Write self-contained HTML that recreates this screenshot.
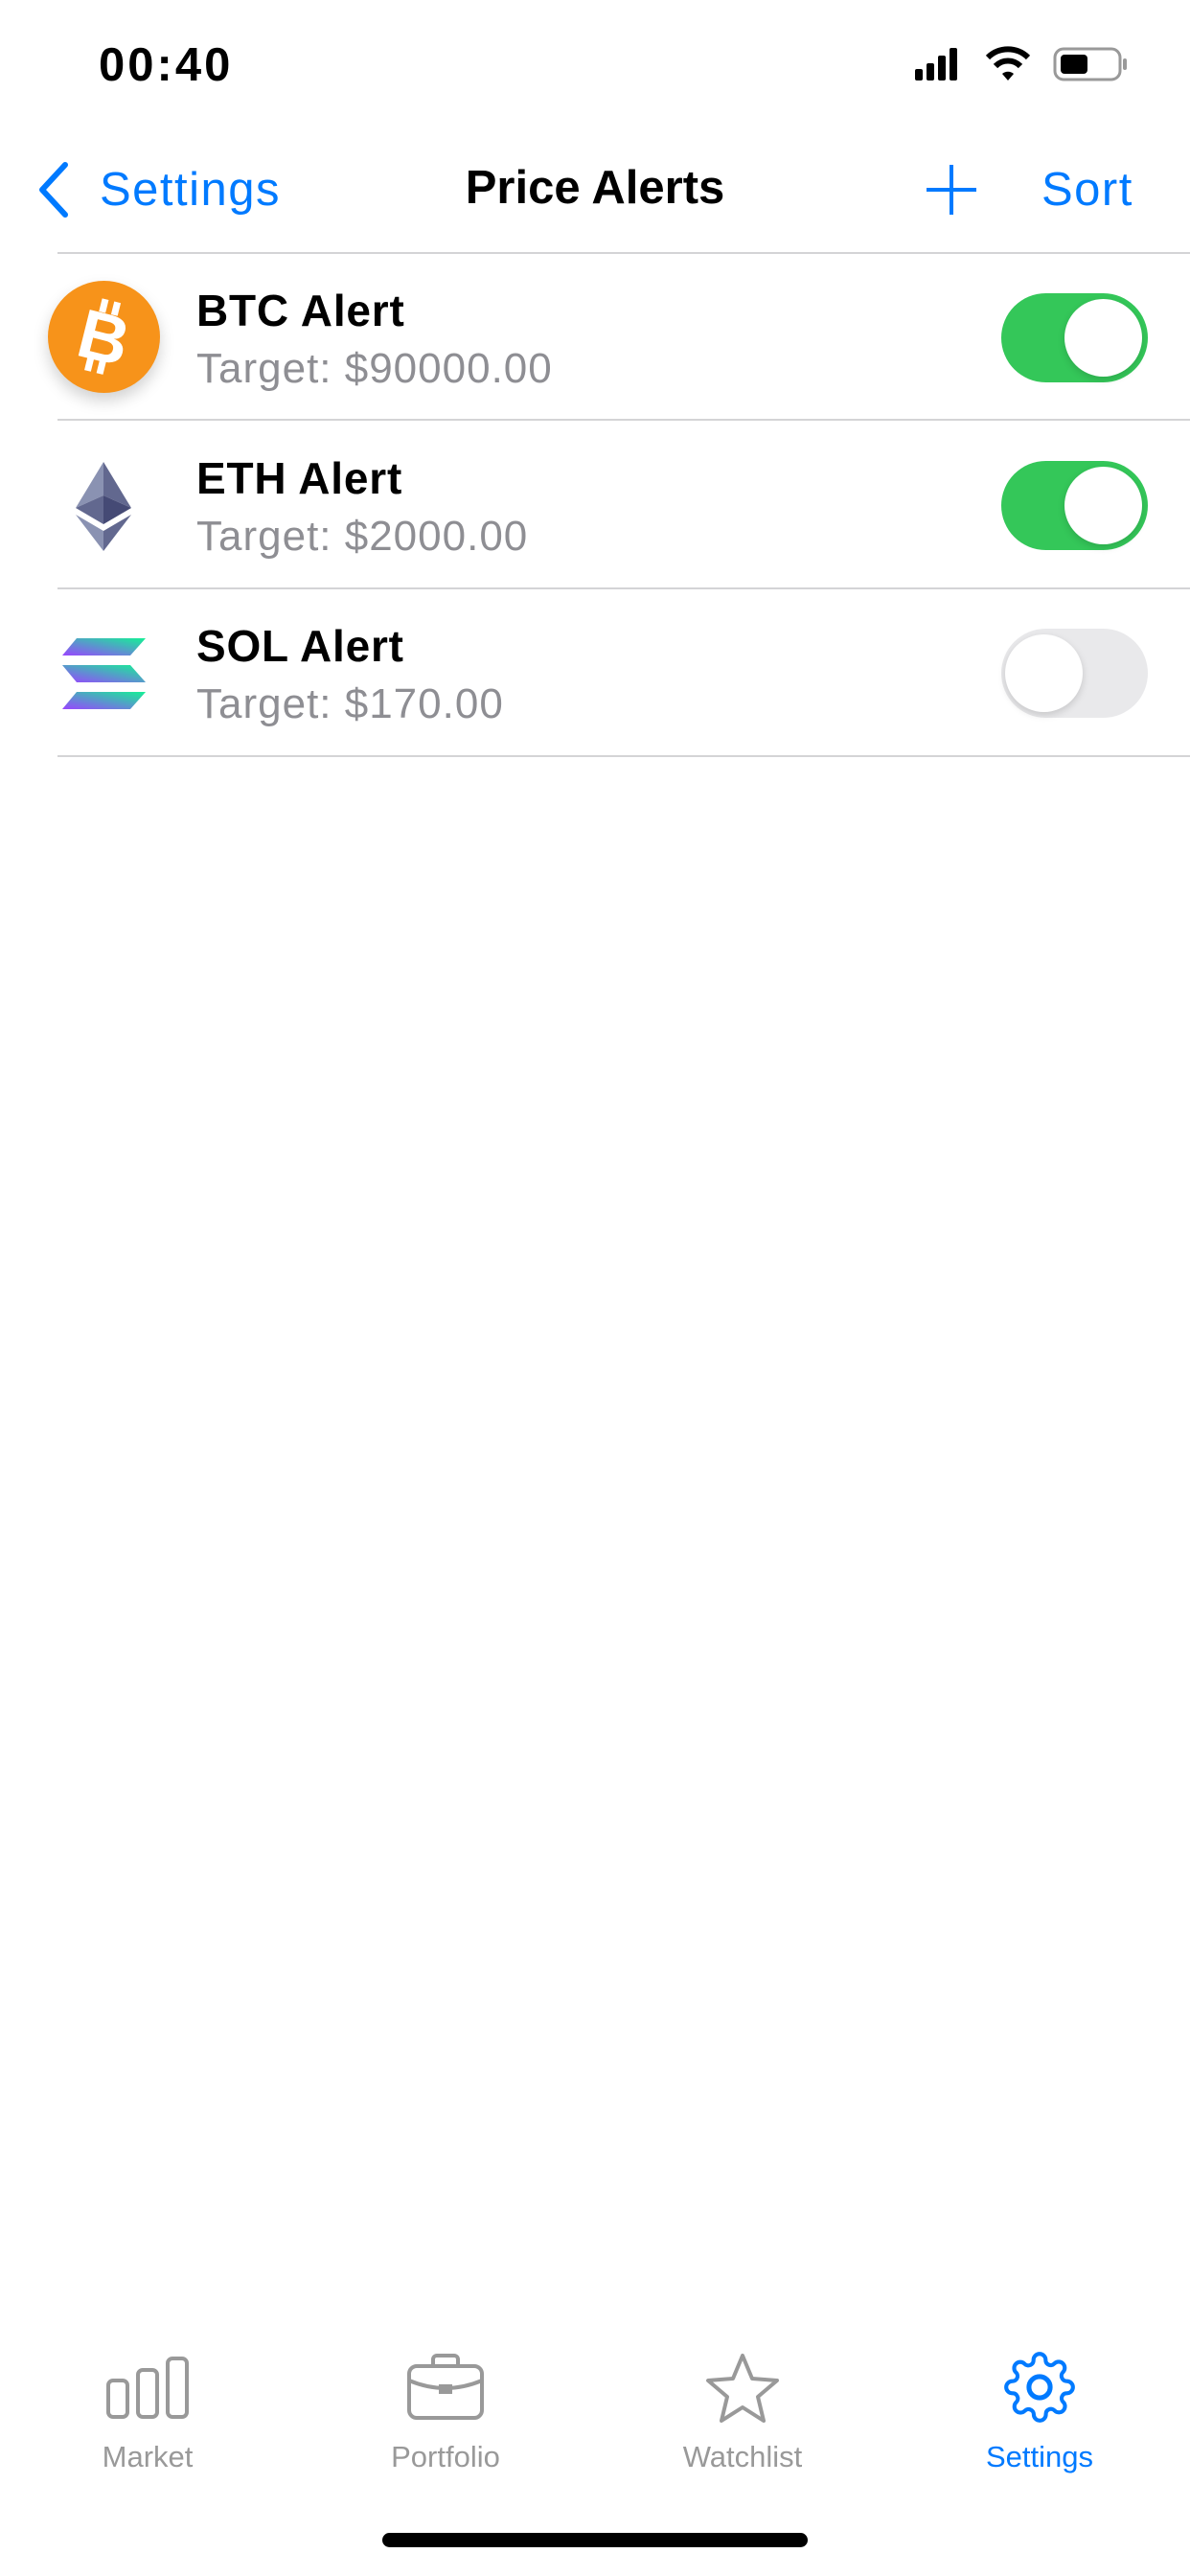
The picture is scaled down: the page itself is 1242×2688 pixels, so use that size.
<!DOCTYPE html>
<html><head><meta charset="utf-8"><style>
*{margin:0;padding:0;box-sizing:border-box}
body{width:1242px;height:2688px;background:#fff;position:relative;overflow:hidden;font-family:"Liberation Sans",sans-serif}
.a{position:absolute}
.blue{color:#007aff}
.sep{position:absolute;left:60px;right:0;height:2px;background:#d4d4d6}
.title{position:absolute;left:205px;font-size:46px;letter-spacing:0.8px;font-weight:bold;color:#000}
.sub{position:absolute;left:205px;font-size:44px;letter-spacing:1px;color:#8e8e93}
.tog{position:absolute;left:1045px;width:153px;height:93px;border-radius:47px}
.tog .k{position:absolute;top:6px;width:81px;height:81px;border-radius:50%;background:#fff;box-shadow:0 3px 8px rgba(0,0,0,.15)}
.on{background:#34c759}.on .k{right:6px}
.off{background:#e9e9eb}.off .k{left:4px}
.tl{position:absolute;top:2546px;font-size:31px;color:#999;text-align:center;width:220px}
</style></head><body>
<div class="a" style="left:103px;top:40px;font-size:49px;letter-spacing:3px;font-weight:bold">00:40</div>
<svg class="a" style="left:955px;top:48px" width="225" height="40" viewBox="0 0 225 40">
<rect x="0" y="24" width="8" height="12" rx="2"/><rect x="12" y="18" width="8" height="18" rx="2"/><rect x="24" y="10" width="8" height="26" rx="2"/><rect x="36" y="2" width="8" height="34" rx="2"/>
<path d="M76 12a30 30 0 0 1 42 0" stroke="#000" stroke-width="6" fill="none"/><path d="M84 21a18 18 0 0 1 26 0" stroke="#000" stroke-width="6" fill="none"/><path d="M91 29l6 7 6-7a9 9 0 0 0-12 0z"/>
<rect x="146" y="3" width="68" height="32" rx="9" fill="none" stroke="#999" stroke-width="3"/><rect x="152" y="9" width="28" height="20" rx="4"/><rect x="217" y="13" width="4" height="12" rx="2" fill="#999"/>
</svg>
<svg class="a" style="left:38px;top:168px" width="36" height="60" viewBox="0 0 36 60"><path d="M30 4L6 30l24 26" stroke="#007aff" stroke-width="6" fill="none" stroke-linecap="round" stroke-linejoin="round"/></svg>
<div class="a blue" style="left:104px;top:170px;font-size:49px;letter-spacing:1.5px">Settings</div>
<div class="a" style="left:0;width:1242px;top:168px;text-align:center;font-size:49px;font-weight:bold">Price Alerts</div>
<svg class="a" style="left:965px;top:170px" width="56" height="56"><path d="M28 2v52M2 28h52" stroke="#007aff" stroke-width="4"/></svg>
<div class="a blue" style="left:1087px;top:170px;font-size:49px;letter-spacing:1.5px">Sort</div>
<div class="sep" style="top:263px"></div>
<div class="sep" style="top:437px"></div>
<div class="sep" style="top:613px"></div>
<div class="sep" style="top:788px"></div>

<div class="a" style="left:50px;top:293px;width:117px;height:117px;border-radius:50%;background:#f7931a;box-shadow:0 8px 16px rgba(0,0,0,.18)"></div>
<svg class="a" style="left:50px;top:293px" width="117" height="117" viewBox="0 0 117 117"><g transform="rotate(14 58.5 58.5)" fill="#fff">
<rect x="47" y="20" width="7" height="14"/><rect x="60" y="20" width="7" height="14"/><rect x="47" y="83" width="7" height="14"/><rect x="60" y="83" width="7" height="14"/>
<text x="58.5" y="84" text-anchor="middle" font-family="Liberation Sans" font-weight="bold" font-size="72">B</text></g></svg>
<div class="title" style="top:297px">BTC Alert</div>
<div class="sub" style="top:360px">Target: $90000.00</div>
<div class="tog on" style="top:306px"><div class="k"></div></div>

<svg class="a" style="left:70px;top:475px" width="76" height="108" viewBox="0 0 76 108"><g transform="translate(9,7)">
<path d="M29 0L0 48l29-13z" fill="#8a92b2"/><path d="M29 0l29 48-29-13z" fill="#62688f"/>
<path d="M0 48l29 17V35z" fill="#62688f"/><path d="M58 48L29 65V35z" fill="#454a75"/>
<path d="M0 55l29 38V72z" fill="#8a92b2"/><path d="M58 55L29 93V72z" fill="#62688f"/></g></svg>
<div class="title" style="top:472px">ETH Alert</div>
<div class="sub" style="top:535px">Target: $2000.00</div>
<div class="tog on" style="top:481px"><div class="k"></div></div>

<svg class="a" style="left:62px;top:662px" width="92" height="84" viewBox="0 0 92 84"><defs><linearGradient id="g" x1="0" y1="1" x2="1" y2="0"><stop offset="0" stop-color="#9945ff"/><stop offset="1" stop-color="#14f195"/></linearGradient></defs>
<g fill="url(#g)"><path d="M18 4h72l-16 18H3z"/><path d="M3 32h71l16 18H18z"/><path d="M18 60h72l-16 18H3z"/></g></svg>
<div class="title" style="top:647px">SOL Alert</div>
<div class="sub" style="top:710px">Target: $170.00</div>
<div class="tog off" style="top:656px"><div class="k"></div></div>

<svg class="a" style="left:110px;top:2458px" width="90" height="66" viewBox="0 0 90 66" fill="none" stroke="#999" stroke-width="4"><rect x="3" y="26" width="20" height="38" rx="5"/><rect x="34" y="15" width="20" height="49" rx="5"/><rect x="65" y="3" width="20" height="61" rx="5"/></svg>
<div class="tl" style="left:44px">Market</div>
<svg class="a" style="left:424px;top:2456px" width="82" height="70" viewBox="0 0 82 70" fill="none" stroke="#999" stroke-width="4"><rect x="3" y="13" width="76" height="54" rx="8"/><path d="M28 13V6a4 4 0 0 1 4-4h18a4 4 0 0 1 4 4v7"/><path d="M3 28q38 16 76 0"/><rect x="36" y="34" width="10" height="6" fill="#999"/></svg>
<div class="tl" style="left:355px">Portfolio</div>
<svg class="a" style="left:735px;top:2454px" width="80" height="74" viewBox="0 0 80 74"><path d="M40 4l10 24 26 2-20 17 6 25-22-14-22 14 6-25L4 30l26-2z" fill="none" stroke="#999" stroke-width="4" stroke-linejoin="round"/></svg>
<div class="tl" style="left:665px">Watchlist</div>
<svg class="a" style="left:1047px;top:2453px" width="76" height="76" viewBox="0 0 24 24"><path d="M12 15.5a3.5 3.5 0 1 0 0-7 3.5 3.5 0 0 0 0 7z" fill="none" stroke="#007aff" stroke-width="1.6"/><path d="M19.4 15a1.650 1.650 0 0 0 .33 1.82l.06.06a2 2 0 1 1-2.830 2.830l-.06-.06a1.650 1.650 0 0 0-1.820-.33 1.650 1.650 0 0 0-1 1.510V21a2 2 0 1 1-4 0v-.09A1.650 1.650 0 0 0 9 19.4a1.650 1.650 0 0 0-1.820.33l-.06.06a2 2 0 1 1-2.830-2.830l.06-.06A1.650 1.650 0 0 0 4.680 15a1.650 1.650 0 0 0-1.510-1H3a2 2 0 1 1 0-4h.09A1.650 1.650 0 0 0 4.6 9a1.650 1.650 0 0 0-.33-1.820l-.06-.06a2 2 0 1 1 2.830-2.830l.06.06A1.650 1.650 0 0 0 9 4.680a1.650 1.650 0 0 0 1-1.510V3a2 2 0 1 1 4 0v.09a1.650 1.650 0 0 0 1 1.510 1.650 1.650 0 0 0 1.820-.33l.06-.06a2 2 0 1 1 2.830 2.830l-.06.06A1.650 1.650 0 0 0 19.4 9a1.650 1.650 0 0 0 1.510 1H21a2 2 0 1 1 0 4h-.09a1.650 1.650 0 0 0-1.510 1z" fill="none" stroke="#007aff" stroke-width="1.3"/></svg>
<div class="tl" style="left:975px;color:#007aff">Settings</div>
<div class="a" style="left:399px;top:2643px;width:444px;height:15px;border-radius:8px;background:#000"></div>
</body></html>
